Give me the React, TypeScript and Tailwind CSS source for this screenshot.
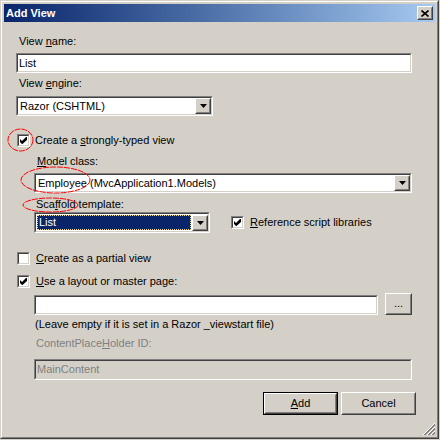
import React from 'react';

const sunkenOuter = 'border border-t-[#808080] border-l-[#808080] border-r-white border-b-white';
const sunkenInner = 'border border-t-[#404040] border-l-[#404040] border-r-[#d4d0c8] border-b-[#d4d0c8]';
const raisedOuter = 'border border-t-white border-l-white border-r-[#404040] border-b-[#404040]';
const raisedInner = 'border border-t-[#d4d0c8] border-l-[#d4d0c8] border-r-[#808080] border-b-[#808080]';

function Key({ children }: { children: React.ReactNode }) {
  return <span className="underline underline-offset-1">{children}</span>;
}

function Field({ value, className = '', disabled }: { value?: string; className?: string; disabled?: boolean }) {
  return (
    <div className={`${sunkenOuter} ${className}`}>
      <div
        className={`${sunkenInner} flex h-full items-center pl-[1px] ${
          disabled ? 'bg-[#d4d0c8] text-[#808080]' : 'bg-white'
        }`}
      >
        {value}
      </div>
    </div>
  );
}

function ArrowButton() {
  return (
    <div className={`${raisedOuter} h-[16px] w-[16px] shrink-0 self-center`}>
      <div className={`${raisedInner} flex h-full items-center justify-center bg-[#d4d0c8]`}>
        <svg width="7" height="4" viewBox="0 0 7 4">
          <path d="M0 0h7L3.5 4z" fill="#000" />
        </svg>
      </div>
    </div>
  );
}

function Select({ value, className = '', selected }: { value: string; className?: string; selected?: boolean }) {
  return (
    <div className={`${sunkenOuter} ${className}`}>
      <div className={`${sunkenInner} flex h-full bg-white`}>
        {selected ? (
          <div className="m-[1px] flex flex-1 items-center border border-dotted border-[#e8d890] bg-[#0a246a] pl-[1px] text-white">
            {value}
          </div>
        ) : (
          <div className="flex flex-1 items-center pl-[2px]">{value}</div>
        )}
        <ArrowButton />
      </div>
    </div>
  );
}

function Checkbox({ checked }: { checked?: boolean }) {
  return (
    <div className={`${sunkenOuter} h-[13px] w-[13px] shrink-0`}>
      <div className={`${sunkenInner} flex h-full items-center justify-center bg-white`}>
        {checked && (
          <svg width="7" height="7" viewBox="0 0 7 7">
            <path d="M0 2L2 4L6 0H7V3L2.5 7H2L0 5Z" fill="#000" />
          </svg>
        )}
      </div>
    </div>
  );
}

function Button({ children, isDefault }: { children: React.ReactNode; isDefault?: boolean }) {
  const body = (
    <div className={`${raisedOuter} h-full w-full`}>
      <div className={`${raisedInner} flex h-full items-center justify-center bg-[#d4d0c8]`}>{children}</div>
    </div>
  );
  return isDefault ? (
    <div className="h-[23px] w-[75px] border border-black">{body}</div>
  ) : (
    <div className="h-[23px] w-[75px]">{body}</div>
  );
}

export default function App() {
  return (
    <div className="relative h-[440px] w-[440px] bg-[#d4d0c8] font-['Liberation_Sans',Arial,sans-serif] text-[11px] leading-[13px] text-black">
      <div className="h-[439px] w-[439px] border border-t-[#d4d0c8] border-l-[#d4d0c8] border-r-[#404040] border-b-[#404040]">
        <div className="relative flex h-full flex-col border border-t-white border-l-white border-r-[#808080] border-b-[#808080] p-[2px]">
          {/* title bar */}
          <div className="flex h-[18px] shrink-0 items-center justify-between bg-linear-to-r from-[#0a246a] to-[#a6caf0] pl-[2px] pr-[2px]">
            <span className="font-bold text-white">Add View</span>
            <div className={`${raisedOuter} h-[14px] w-[16px]`}>
              <div className={`${raisedInner} flex h-full items-center justify-center bg-[#d4d0c8]`}>
                <svg width="8" height="7" viewBox="0 0 8 7">
                  <path d="M0.5 0.5L7.5 6.5M7.5 0.5L0.5 6.5" stroke="#000" strokeWidth="1.6" />
                </svg>
              </div>
            </div>
          </div>

          {/* body */}
          <div className="flex flex-1 flex-col pl-[12px] pr-[23px] pt-[13px]">
            <div className="h-[13px] pl-[3px]">
              View <Key>n</Key>ame:
            </div>
            <Field value="List" className="mt-[5px] h-[20px] w-full" />

            <div className="mt-[4px] h-[13px] pl-[3px]">
              View <Key>e</Key>ngine:
            </div>
            <Select value="Razor (CSHTML)" className="mt-[6px] h-[20px] w-[197px]" />

            <div className="mt-[18px] flex h-[13px] items-center pl-[1px]">
              <Checkbox checked />
              <span className="ml-[5px]">
                Create a <Key>s</Key>trongly-typed view
              </span>
            </div>

            <div className="flex flex-col pl-[18px]">
              <div className="mt-[8px] h-[13px] pl-[3px]">
                <Key>M</Key>odel class:
              </div>
              <Select value="Employee (MvcApplication1.Models)" className="mt-[5px] h-[20px] w-full" />

              <div className="mt-[5px] h-[13px] pl-[2px]">
                Sca<Key>f</Key>fold template:
              </div>
              <div className="mt-[1px] flex h-[21px] items-center">
                <Select value="List" selected className="h-[21px] w-[176px]" />
                <div className="ml-[21px]">
                  <Checkbox checked />
                </div>
                <span className="ml-[6px]">
                  <Key>R</Key>eference script libraries
                </span>
              </div>
            </div>

            <div className="mt-[19px] flex h-[13px] items-center pl-[1px]">
              <Checkbox />
              <span className="ml-[6px]">
                <Key>C</Key>reate as a partial view
              </span>
            </div>

            <div className="mt-[10px] flex h-[13px] items-center pl-[1px]">
              <Checkbox checked />
              <span className="ml-[6px]">
                <Key>U</Key>se a layout or master page:
              </span>
            </div>

            <div className="flex flex-col pl-[18px]">
              <div className="mt-[5px] flex h-[22px] items-end">
                <Field className="h-[20px] w-[344px]" />
                <div className="ml-[7px] h-[22px] w-[27px]">
                  <div className={`${raisedOuter} h-full w-full`}>
                    <div className={`${raisedInner} flex h-full items-center justify-center bg-[#d4d0c8] pb-[2px]`}>...</div>
                  </div>
                </div>
              </div>
              <div className="mt-[3px] h-[13px] pl-[1px]">(Leave empty if it is set in a Razor _viewstart file)</div>
              <div className="mt-[6px] h-[13px] pl-[2px] text-[#808080]">
                ContentPlace<Key>H</Key>older ID:
              </div>
              <Field value="MainContent" disabled className="mt-[9px] h-[21px] w-full" />
            </div>

            <div className="-mr-[4px] mt-[12px] flex justify-end gap-[3px]">
              <Button isDefault>
                <Key>A</Key>dd
              </Button>
              <Button>Cancel</Button>
            </div>
          </div>

          {/* size grip */}
          <svg className="absolute bottom-[2px] right-[2px]" width="12" height="12" viewBox="0 0 12 12" shapeRendering="crispEdges">
            {[0, 4, 8].map((d) => (
              <g key={d}>
                <path d={`M${d} 12L12 ${d}`} stroke="#fff" strokeWidth="1" />
                <path d={`M${d + 1} 12L12 ${d + 1}`} stroke="#808080" strokeWidth="1" />
                <path d={`M${d + 2} 12L12 ${d + 2}`} stroke="#808080" strokeWidth="1" />
              </g>
            ))}
          </svg>
        </div>
      </div>

      {/* red annotation marks */}
      <svg className="pointer-events-none absolute inset-0" width="440" height="440" viewBox="0 0 440 440">
        <g fill="none" stroke="#ff0000" strokeWidth="1" strokeDasharray="6 1">
          <ellipse cx="20.5" cy="140" rx="12.5" ry="11" />
          <ellipse cx="55.5" cy="180" rx="34.5" ry="13" />
          <ellipse cx="50.5" cy="205" rx="27.5" ry="7" />
        </g>
      </svg>
    </div>
  );
}
